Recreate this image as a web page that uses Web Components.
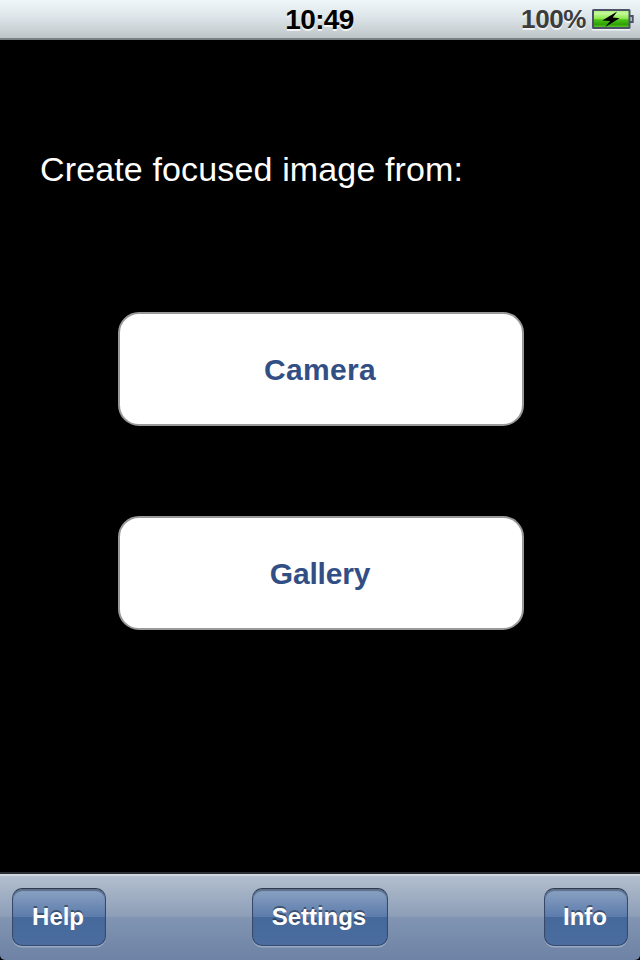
<!DOCTYPE html>
<html lang="en">
<head>
<meta charset="utf-8">
<title>Focused image</title>
<style>
  body {
    margin: 0;
    background: #000;
    font-family: "Liberation Sans", Arial, sans-serif;
  }
</style>
</head>
<body>
<focus-app></focus-app>

<script>
const define = (name, html) => {
  const template = document.createElement("template");
  template.innerHTML = html;
  customElements.define(name, class extends HTMLElement {
    constructor() {
      super();
      this.attachShadow({ mode: "open" });
      this.shadowRoot.appendChild(template.content.cloneNode(true));
    }
  });
};

define("battery-icon", `
  <style>
    :host { display: block; width: 42px; height: 20px; }
    svg { display: block; overflow: visible; }
  </style>
  <svg width="42" height="22" viewBox="0 0 42 22">
    <defs>
      <linearGradient id="charge" x1="0" y1="0" x2="0" y2="1">
        <stop offset="0" stop-color="#a5ea70"/>
        <stop offset=".18" stop-color="#c4fa9a"/>
        <stop offset=".48" stop-color="#8de64c"/>
        <stop offset=".54" stop-color="#4cc41a"/>
        <stop offset=".8" stop-color="#2fa004"/>
        <stop offset="1" stop-color="#65cf35"/>
      </linearGradient>
    </defs>
    <path d="M0 20.7H38" stroke="#fff" stroke-width="1.4" opacity=".75"/>
    <path d="M38 7h2.7v6H38" fill="#dce4e8" stroke="#4b5268" stroke-width="2"/>
    <rect x="1" y="1" width="36.5" height="18" rx=".5" fill="url(#charge)" stroke="#4b5268" stroke-width="2"/>
    <path d="M25.2 2.5L10.3 11.4l7.9.5-5 6.1 14.4-8.8-6.9-.6z" fill="#000"/>
  </svg>
`);

define("status-bar", `
  <style>
    :host {
      display: grid;
      grid-template-columns: 1fr auto 1fr;
      align-items: center;
      box-sizing: border-box;
      height: 40px;
      padding: 0 6px 0 5px;
      border-bottom: 2px solid #778085;
      background: linear-gradient(#f0f7fa, #dce5e9 45%, #bdc5c9);
      color: #000;
      font-weight: bold;
      text-shadow: 0 2px 0 rgba(255, 255, 255, .75);
    }
    .time { grid-column: 2; padding-top: 1px; font-size: 28px; line-height: 37px; letter-spacing: -.6px; }
    .power { display: flex; justify-content: flex-end; align-items: center; gap: 6px; color: #3c3c3c; font-size: 26px; line-height: 38px; letter-spacing: -.4px; }
  </style>
  <span class="time"><slot name="time"></slot></span>
  <span class="power"><slot name="charge"></slot><battery-icon></battery-icon></span>
`);

define("choice-button", `
  <style>
    :host { display: block; width: 406px; height: 114px; }
    button {
      display: block;
      box-sizing: border-box;
      width: 100%;
      height: 100%;
      margin: 0;
      padding: 2px 2px 0 0;
      border: 2px solid #999;
      border-radius: 21px;
      background: #fff;
      color: #324f85;
      font: bold 30px/34px "Liberation Sans", Arial, sans-serif;
      letter-spacing: var(--tracking, 0);
    }
  </style>
  <button><slot></slot></button>
`);

define("bar-button", `
  <style>
    :host { display: block; height: 58px; }
    button {
      display: block;
      box-sizing: border-box;
      width: 100%;
      height: 100%;
      margin: 0;
      padding: 0 2px 1px 0;
      border: 1.5px solid #38496a;
      border-top-color: #2f3a4c;
      border-radius: 10px;
      background: linear-gradient(#8ba3c4, #5b7bab 50%, #46699b 50%, #4a6c9f);
      box-shadow: inset 0 2px 1px rgba(25, 35, 55, .4), 0 1.5px 0 rgba(190, 205, 225, .5);
      color: #fff;
      font: bold 24px/28px "Liberation Sans", Arial, sans-serif;
      letter-spacing: -.05px;
      text-shadow: 0 -2px 0 rgba(0, 0, 0, .4);
    }
  </style>
  <button><slot></slot></button>
`);

define("tool-bar", `
  <style>
    :host {
      display: grid;
      grid-template-columns: 94px 136px 84px;
      justify-content: space-between;
      box-sizing: border-box;
      height: 88px;
      padding: 14px 12px 0;
      border-top: 2px solid #2b2f33;
      border-radius: 0 0 5px 5px;
      background: linear-gradient(#d0d7de 2px, #b3bfce 2px, #8c9db7 50%, #8194b2 50%, #6d82a5);
    }
    /* the centre item sits on the screen's midline */
    ::slotted(:nth-child(2)) { margin-left: -5px; margin-right: 5px; }
  </style>
  <slot></slot>
`);

define("focus-app", `
  <style>
    :host { display: flex; flex-direction: column; width: 640px; height: 960px; background: #000; overflow: hidden; }
    main { flex: 1; display: flex; flex-direction: column; align-items: center; padding-left: 2px; }
    h1 {
      align-self: stretch;
      margin: 109px 0 123px 38px;
      color: #fff;
      font-size: 34px;
      font-weight: normal;
      line-height: 40px;
      letter-spacing: .14px;
    }
    .camera { --tracking: .35px; }
    .gallery { --tracking: -.2px; margin-top: 90px; }
  </style>
  <status-bar><span slot="time">10:49</span><span slot="charge">100%</span></status-bar>
  <main>
    <h1>Create focused image from:</h1>
    <choice-button class="camera">Camera</choice-button>
    <choice-button class="gallery">Gallery</choice-button>
  </main>
  <tool-bar>
    <bar-button>Help</bar-button>
    <bar-button>Settings</bar-button>
    <bar-button>Info</bar-button>
  </tool-bar>
`);
</script>
</body>
</html>
